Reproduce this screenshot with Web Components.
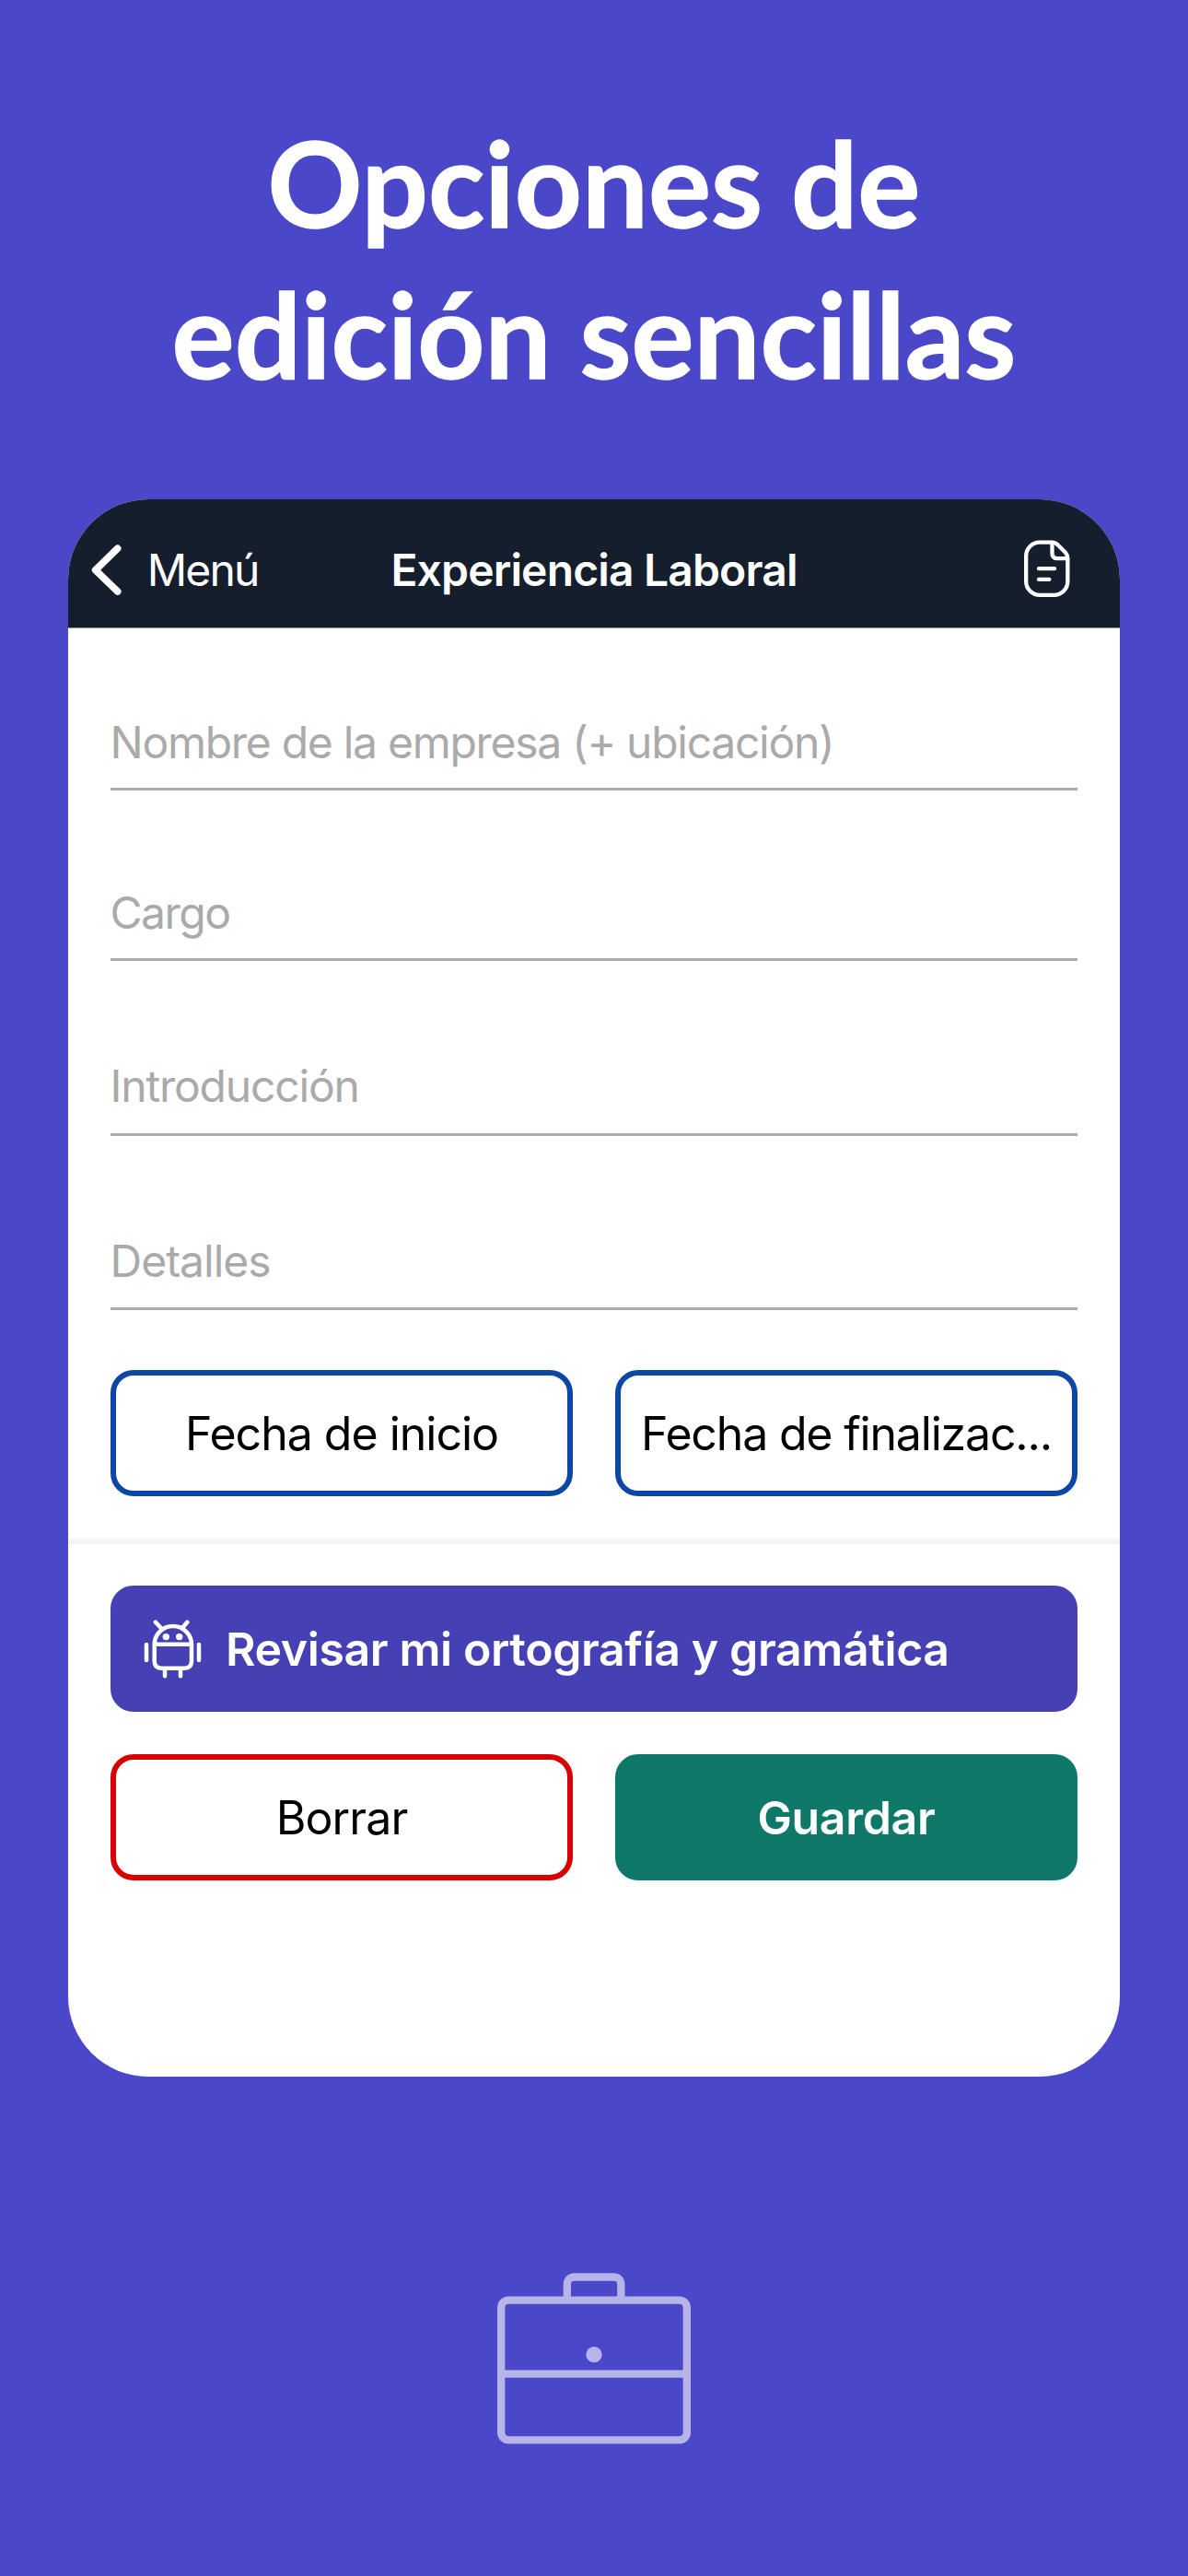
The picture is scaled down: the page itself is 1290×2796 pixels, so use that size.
<!DOCTYPE html>
<html lang="es">
<head>
<meta charset="utf-8">
<title>Opciones de edición sencillas</title>
<style>
  html, body { margin: 0; height: 100%; background: #4a48c8; }
  body { font-family: Inter, "Liberation Sans", sans-serif; }
</style>
</head>
<body>
<promo-page>
  <promo-title slot="title">Opciones de<br>edición sencillas</promo-title>
  <app-card>
    <nav-bar slot="bar">
      <span slot="back">Menú</span>
      <span slot="title">Experiencia Laboral</span>
    </nav-bar>
    <text-field style="--track:-1.28px">Nombre de la empresa (+ ubicación)</text-field>
    <text-field style="--above:103px;--track:-1.5px">Cargo</text-field>
    <text-field style="--above:106px;--below:22px;--track:-1.18px">Introducción</text-field>
    <text-field style="--above:106px;--below:21px;--track:-1px">Detalles</text-field>
    <button-row style="--above:65px">
      <app-button kind="date" style="--track:-1px">Fecha de inicio</app-button>
      <app-button kind="date" style="--track:-1.18px">Fecha de finalizac...</app-button>
    </button-row>
    <section-divider></section-divider>
    <button-row style="--above:45px">
      <app-button kind="check" style="--track:-.4px"><android-icon slot="icon"></android-icon>Revisar mi ortografía y gramática</app-button>
    </button-row>
    <button-row style="--above:46px">
      <app-button kind="delete" style="--track:-.9px">Borrar</app-button>
      <app-button kind="save" style="--track:-.3px">Guardar</app-button>
    </button-row>
  </app-card>
  <briefcase-icon slot="footer"></briefcase-icon>
</promo-page>

<script>
const define = (name, html) => {
  const template = document.createElement('template');
  template.innerHTML = html;
  customElements.define(name, class extends HTMLElement {
    constructor() {
      super();
      this.attachShadow({ mode: 'open' }).append(template.content.cloneNode(true));
    }
  });
};

define('promo-page', `
<style>
  :host { display: flex; flex-direction: column; align-items: center; box-sizing: border-box;
          width: 1290px; height: 2796px; padding-top: 116px; background: #4a48c8; }
  .card { margin-top: 98px; }
  .foot { margin-top: 213px; }
</style>
<slot name="title"></slot>
<div class="card"><slot></slot></div>
<div class="foot"><slot name="footer"></slot></div>`);

define('promo-title', `
<style>
  :host { display: block; height: 328px; color: #fff; text-align: center; white-space: nowrap;
          font: 700 127.5px/164px Lato, sans-serif; -webkit-text-stroke: 1.3px #fff; }
</style>
<slot></slot>`);

define('app-card', `
<style>
  :host { display: flex; flex-direction: column; width: 1142px; height: 1712px;
          border-radius: 87px; overflow: hidden; background: #fff; }
  .form { display: flex; flex-direction: column; padding-top: 94px; }
</style>
<slot name="bar"></slot>
<div class="form"><slot></slot></div>`);

define('nav-bar', `
<style>
  :host { display: grid; grid-template-columns: 1fr auto 1fr; align-items: center; box-sizing: border-box;
          height: 140px; padding: 14px 52.7px 0 24.3px; background: #151e2d; color: #fff;
          border-bottom: 1px solid #85888e; font-size: 48px; line-height: 60px; white-space: nowrap; }
  .back { display: flex; align-items: center; gap: 26.4px; letter-spacing: -1.8px; }
  .title { font-weight: 600; letter-spacing: -.85px; margin-left: 28.4px; }
  .doc { justify-self: end; }
  svg { display: block; fill: none; stroke: #fff; stroke-linecap: round; stroke-linejoin: round; }
</style>
<div class="back">
  <svg width="35" height="60" viewBox="115 175 105 180" stroke-width="23"><path d="M204 194L132 264.500L204 334"/></svg>
  <slot name="back"></slot>
</div>
<div class="title"><slot name="title"></slot></div>
<svg class="doc" width="53.33" height="66.67" viewBox="90 165.5 160 200" stroke-width="13">
  <path d="M188 176.500H147A44.500 44.500 0 0 0 102.500 221V303.500A44.500 44.500 0 0 0 147 348H193.500A44.500 44.500 0 0 0 238 303.500V228Q238 218 231 210L206 185Q198 176.500 188 176.500Z"/>
  <path d="M187.500 178V211Q187.500 229 205 229H237M144 262H195M144 297H178"/>
</svg>`);

define('text-field', `
<style>
  :host { display: block; height: 60px; margin: var(--above, 0) 46px 0; padding-bottom: calc(var(--below, 20px) - 1px);
          border-bottom: 3px solid #ababab; color: #aaa; font-size: 48px; line-height: 60px;
          letter-spacing: var(--track, 0); text-indent: -.5px; white-space: nowrap; }
</style>
<slot></slot>`);

define('button-row', `
<style>
  :host { display: flex; gap: 46px; margin: var(--above) 46px 0; }
  ::slotted(*) { flex: 1 1 502px; }
</style>
<slot></slot>`);

define('app-button', `
<style>
  :host { min-width: 0; display: flex; align-items: center; justify-content: center;
          box-sizing: border-box; height: 137px; border: 6px solid transparent; border-radius: 25px;
          color: #000; font-size: 50px; line-height: 60px; letter-spacing: var(--track, 0); white-space: nowrap; }
  :host([kind="date"]) { border-color: #0d47a6; }
  :host([kind="delete"]) { border-color: #d60000; }
  :host([kind="save"]) { background: #0f7868; border-color: #0f7868; color: #fff; font-weight: 600; }
  :host([kind="check"]) { background: #4540b4; border-color: #4540b4; color: #fff; font-weight: 600;
          justify-content: flex-start; gap: 25px; padding-left: 30px; }
</style>
<slot name="icon"></slot><span><slot></slot></span>`);

define('section-divider', `
<style>:host { display: block; height: 6px; margin-top: 46px; background: #f4f4f4; }</style>`);

define('android-icon', `
<style>
  :host { display: block; }
  svg { display: block; fill: none; stroke: #fff; stroke-width: 4.500; stroke-linecap: round; }
</style>
<svg width="64" height="66" viewBox="56 56 64 66">
  <path d="M67.700 83.700A20.150 19.700 0 0 1 108 83.700V102Q108 109.700 100.500 109.700H75.200Q67.700 109.700 67.700 102ZH108"/>
  <path d="M68.900 59.700L75.500 66.800M103.300 59.700L97.700 66.300M59 84V101M116 84V101M79 111V118.200M96 111V118.200"/>
  <g fill="#fff" stroke="none"><circle cx="80.300" cy="75.600" r="3.700"/><circle cx="94.700" cy="75.600" r="3.700"/></g>
</svg>`);

define('briefcase-icon', `
<style>
  :host { display: block; }
  svg { display: block; fill: none; stroke: #b6b4e8; stroke-width: 25; }
</style>
<svg width="210" height="186" viewBox="60 51 630 558">
  <rect x="72.500" y="140" width="605" height="455" rx="24"/>
  <path d="M287.500 140V90Q287.500 64.500 313 64.500H437Q463 64.500 463 90V140M73 380H677"/>
  <circle cx="375" cy="317" r="26" fill="#b6b4e8" stroke="none"/>
</svg>`);
</script>
</body>
</html>
